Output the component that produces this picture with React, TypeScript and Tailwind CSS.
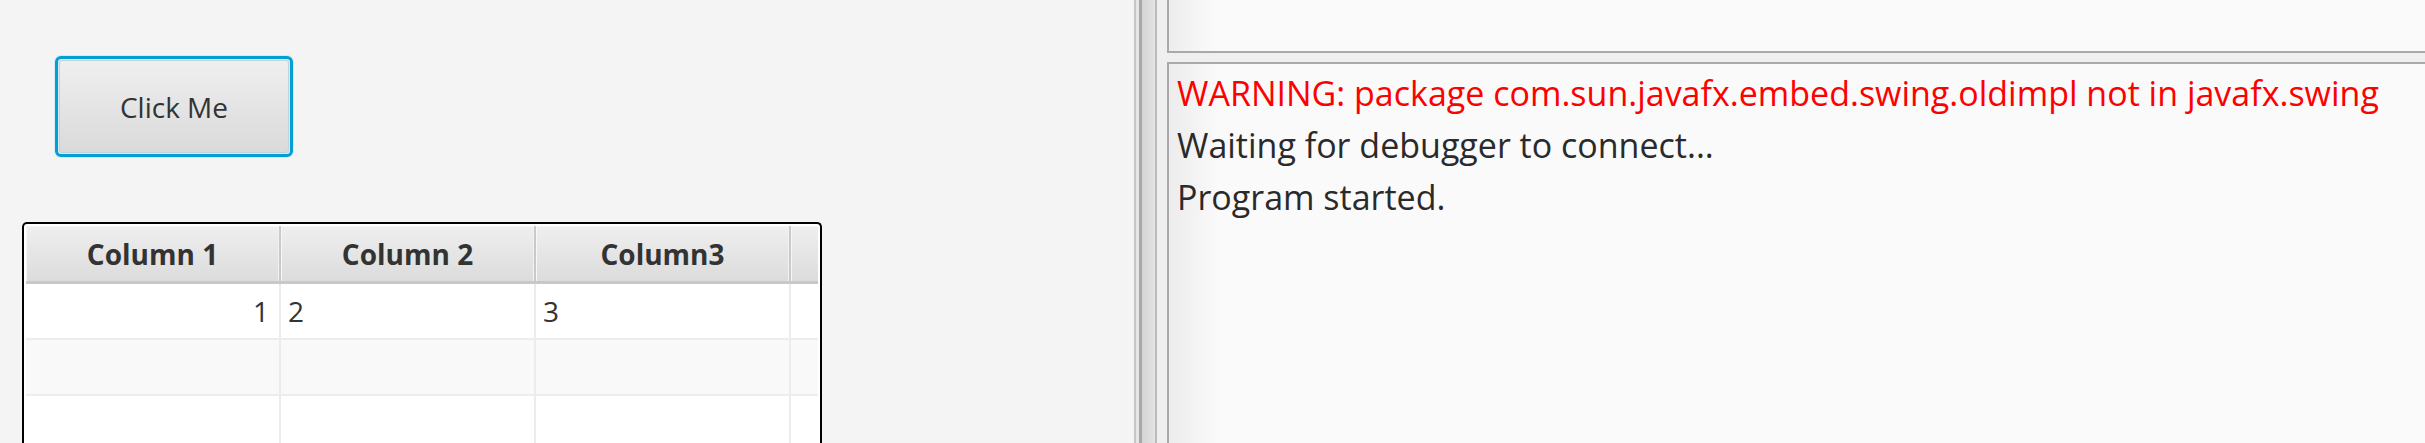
import React from "react";

const font = { fontFamily: '"Open Sans", "Noto Sans", sans-serif' };

function HeaderCell({ label, w }: { label: string; w: string }) {
  return (
    <div
      className={`${w} h-full flex items-center justify-center border-r-2 border-[#c9c9c9] bg-gradient-to-b from-[#efefef] to-[#dcdcdc] shadow-[inset_1px_1px_0_#f7f7f7,inset_-1px_0_0_#f2f2f2] text-[28px] font-bold text-[#333333]`}
    >
      {label}
    </div>
  );
}

function Row({ a, b, c, alt }: { a?: string; b?: string; c?: string; alt?: boolean }) {
  return (
    <div className={`flex h-[56px] border-b-2 border-[#ededed] ${alt ? "bg-[#f9f9f9]" : "bg-white"} text-[28px] text-[#333333]`}>
      <div className="w-[255px] h-full flex items-center justify-end pr-[10px] border-r-2 border-[#ececec]">{a}</div>
      <div className="w-[255px] h-full flex items-center pl-[7px] border-r-2 border-[#ececec]">{b}</div>
      <div className="w-[255px] h-full flex items-center pl-[7px] border-r-2 border-[#ececec]">{c}</div>
      <div className="flex-1 h-full" />
    </div>
  );
}

export default function App() {
  return (
    <div className="w-[2425px] h-[443px] flex overflow-hidden bg-[#f4f4f4]" style={font}>
      {/* left pane */}
      <div className="w-[1134px] h-full flex flex-col bg-[#f4f4f4]">
        <div className="ml-[54px] mt-[55px] w-[240px] h-[103px] rounded-[7px] p-[1px] bg-[#d5ecf5]">
          <div className="w-full h-full rounded-[6px] border-[3px] border-[#039ed3] p-[1px]">
            <div className="w-full h-full rounded-[3px] border border-[#bfd3dc] bg-gradient-to-b from-[#efefef] to-[#dadada] flex items-center justify-center text-[28px] text-[#333333]">
              Click Me
            </div>
          </div>
        </div>
        <div className="ml-[22px] mt-[64px] w-[800px] flex-1 rounded-t-[5px] border-2 border-b-0 border-black bg-white pt-[2px] px-[2px] overflow-hidden">
          <div className="flex h-[58px] border-b-[3px] border-[#c8c8c8] bg-[#e4e4e4]">
            <HeaderCell label="Column 1" w="w-[255px]" />
            <HeaderCell label="Column 2" w="w-[255px]" />
            <HeaderCell label="Column3" w="w-[255px]" />
            <div className="flex-1 h-full bg-gradient-to-b from-[#efefef] to-[#dcdcdc] shadow-[inset_1px_1px_0_#f7f7f7]" />
          </div>
          <Row a="1" b="2" c="3" />
          <Row alt />
          <Row />
        </div>
      </div>

      {/* divider */}
      <div className="w-[23px] h-full flex">
        <div className="w-[2px] bg-[#c6c6c6]" />
        <div className="w-[3px] bg-[#e6e6e6]" />
        <div className="w-[3px] bg-[#a8a8a8]" />
        <div className="w-[13px] bg-gradient-to-r from-[#d4d4d4] to-[#e3e3e3]" />
        <div className="w-[2px] bg-[#bcbcbc]" />
      </div>

      {/* right pane */}
      <div className="flex-1 h-full flex flex-col bg-[#efefef] pl-[10px]">
        <div className="h-[53px] border-l-2 border-b-2 border-[#a9a9a9] bg-[linear-gradient(to_right,#ededed,#fafafa_45px)]" />
        <div className="h-[9px]" />
        <div className="flex-1 border-l-2 border-t-2 border-[#a9a9a9] bg-[linear-gradient(to_right,#ececec,#fafafa_50px)] pl-[8px] pt-[3px] text-[34px] leading-[52px]">
          <div className="text-[#ff0000] whitespace-nowrap">
            WARNING: package com.sun.javafx.embed.swing.oldimpl not in javafx.swing
          </div>
          <div className="text-[#2a2a2a]">Waiting for debugger to connect...</div>
          <div className="text-[#2a2a2a]">Program started.</div>
        </div>
      </div>
    </div>
  );
}
